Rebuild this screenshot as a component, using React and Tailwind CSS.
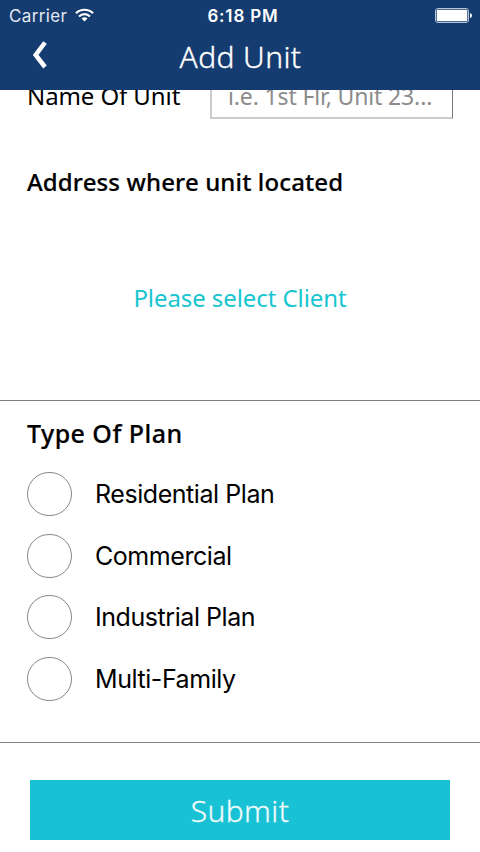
const sans = "font-['Noto_Sans','Open_Sans',sans-serif]";
const plans = ['Residential Plan', 'Commercial', 'Industrial Plan', 'Multi-Family'];

export default function App() {
  return (
    <div className={`flex h-[852px] w-[480px] flex-col overflow-hidden bg-white text-black ${sans}`}>
      <header className="z-10 h-[90px] shrink-0 bg-[#153c70] text-white">
        <div className="grid h-8 grid-cols-3 items-center font-['Inter',sans-serif] text-[17px]">
          <div className="flex items-center gap-2 pl-[9px]">
            <span className="mt-px tracking-[0.35px] text-[#e3e8ef]">Carrier</span>
            <svg className="-mt-[2px]" width="19" height="14" viewBox="0 0 19 14" fill="none" stroke="white" strokeWidth="2.2">
              <path d="M1 5.200a12.200 12.200 0 0 1 17 0M4 8.500a7.700 7.700 0 0 1 11 0" />
              <path d="M9.500 13.500l-3-2.900a4.200 4.200 0 0 1 6 0z" fill="white" stroke="none" />
            </svg>
          </div>
          <span className="mt-px pl-[6px] text-center font-semibold tracking-[0.85px]">6:18 PM</span>
          <div className="-mt-px flex items-center justify-end pr-2">
            <svg width="37" height="15" viewBox="0 0 37 15">
              <rect x=".5" y=".5" width="33" height="14" rx="2.500" fill="none" stroke="#b9c5d5" />
              <rect x="1.700" y="1.700" width="30.600" height="11.600" rx="1.200" fill="white" />
              <path d="M35 5q2 .5 2 2.500t-2 2.500z" fill="white" />
            </svg>
          </div>
        </div>
        <div className="grid h-[58px] grid-cols-[80px_1fr_80px]">
          <svg className="mt-[9px] ml-[32px]" width="16" height="28" viewBox="0 0 16 28" fill="none" stroke="white" strokeWidth="4.500">
            <path d="M13 1.500L3.700 14l9.300 12" />
          </svg>
          <h1 className="pt-[4px] pl-px text-center text-[30px] leading-[42px] font-light tracking-[0.4px] [-webkit-text-stroke:0.35px_white]">Add Unit</h1>
        </div>
      </header>
      <main className="flex min-h-0 flex-1 flex-col">
        <div className="-mt-[11px] flex h-[40px]">
          <label className="ml-[27px] w-[183px] text-[24px] leading-[34px] tracking-[-0.1px]">Name Of Unit</label>
          <div className="h-[40px] w-[243px] border-r border-b-2 border-l-2 border-[#ccc] border-r-[#777] pl-4 text-[#8c8c8c]">
            <div className="text-[23px] leading-[34px] tracking-[-0.14px] whitespace-nowrap">i.e. 1st Flr, Unit 23...</div>
          </div>
        </div>
        <h2 className="mt-[46px] ml-[27px] text-[24px] leading-[34px] font-medium tracking-[0.13px] [-webkit-text-stroke:0.2px_black]">Address where unit located</h2>
        <div className="mt-[82px] text-center text-[24px] leading-[34px] tracking-[-0.08px] text-[#16c5d0]">Please select Client</div>
        <section className="mt-[85px] h-[343px] border-y border-[#808080] px-[27px] pt-[15px]">
          <h2 className="text-[25px] leading-[34px] font-medium tracking-[0.45px] [-webkit-text-stroke:0.2px_black]">Type Of Plan</h2>
          <div className="mt-[22px] flex flex-col gap-[17px]">
            {plans.map((plan) => (
              <label key={plan} className="flex h-[44.500px] items-center gap-[23px] font-['Inter',sans-serif] text-[25px] tracking-[-0.44px]">
                <span className="h-[44px] w-[45px] rounded-full border border-[#888]" />
                <span className="mt-px">{plan}</span>
              </label>
            ))}
          </div>
        </section>
        <button className="mx-[30px] mt-[37px] h-[60px] bg-[#18c2d4] text-[30px] font-light tracking-[0.4px] text-[#f0fbfc] [-webkit-text-stroke:0.3px_#f0fbfc]">Submit</button>
      </main>
    </div>
  );
}
